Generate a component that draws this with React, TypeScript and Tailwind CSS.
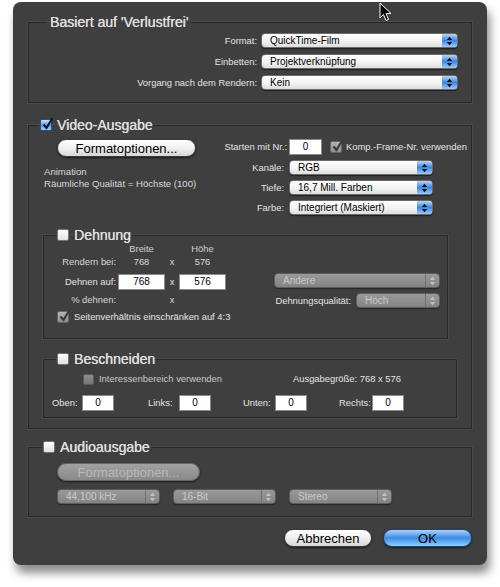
import React from "react"

const font = "font-['Liberation_Sans',Arial,sans-serif]"

function Arrows({ color = "#111" }: { color?: string }) {
  return (
    <svg width="7" height="10" viewBox="0 0 7 10">
      <path d="M3.5 0.8 L6.2 4 H0.8Z M3.5 9.2 L6.2 6 H0.8Z" fill={color} />
    </svg>
  )
}

function Select({ value, w, disabled }: { value: string; w: string; disabled?: boolean }) {
  if (disabled) {
    return (
      <div className={`${w} h-[15px] flex items-stretch rounded-[4px] border border-[#5e5d5e] bg-gradient-to-b from-[#9a999a] to-[#858485] shadow-[0_1px_1px_rgba(0,0,0,0.4)]`}>
        <div className="flex-1 pl-[8px] text-[10px] leading-[13px] text-[#c9c9c9] truncate">{value}</div>
        <div className="w-[14px] border-l border-[#6f6e6f] flex items-center justify-center">
          <Arrows color="#c0c0c0" />
        </div>
      </div>
    )
  }
  return (
    <div className={`${w} h-[15px] flex items-stretch rounded-[4px] border border-[#6b6b6b] bg-gradient-to-b from-white via-[#f4f4f4] to-[#dedede] shadow-[0_1px_1px_rgba(0,0,0,0.5)] overflow-hidden`}>
      <div className="flex-1 pl-[8px] text-[10px] leading-[13px] text-black truncate">{value}</div>
      <div className="w-[15px] bg-gradient-to-b from-[#b8d6f6] via-[#3a86e0] to-[#9ccaf5] flex items-center justify-center">
        <Arrows />
      </div>
    </div>
  )
}

function Check({ kind, size = "w-[12px] h-[12px]" }: { kind: "blue" | "white" | "gray" | "grayoff"; size?: string }) {
  const box =
    kind === "blue"
      ? "bg-gradient-to-b from-[#cfe3fb] via-[#5c9ae8] to-[#a6cdf6] border-[#2c4f86]"
      : kind === "white"
      ? "bg-gradient-to-b from-white to-[#e2e2e2] border-[#777]"
      : kind === "gray"
      ? "bg-gradient-to-b from-[#b3b3b3] to-[#8f8f8f] border-[#666]"
      : "bg-gradient-to-b from-[#8e8e8e] to-[#767676] border-[#5c5c5c]"
  return (
    <div className={`${size} relative shrink-0 rounded-[2px] border ${box}`}>
      {(kind === "blue" || kind === "gray") && (
        <svg className="absolute left-[1px] top-[-3px]" width="12" height="13" viewBox="0 0 12 13">
          <path d="M1.5 7.5 L4.5 11 L10.5 1" fill="none" stroke={kind === "blue" ? "#0d1a33" : "#3a3a3a"} strokeWidth="2.2" />
        </svg>
      )}
    </div>
  )
}

function Input({ value, w }: { value: string; w: string }) {
  return (
    <div className={`${w} h-[16px] bg-white border border-[#8a8a8a] text-[10px] leading-[14px] text-black text-center`}>
      {value}
    </div>
  )
}

function AquaButton({ label, w, blue, disabled }: { label: string; w: string; blue?: boolean; disabled?: boolean }) {
  const skin = disabled
    ? "bg-gradient-to-b from-[#a3a2a3] to-[#8a898a] border-[#666] text-[#b9b9b9]"
    : blue
    ? "bg-gradient-to-b from-[#a9d3fb] via-[#3b8be6] to-[#8fd0fb] border-[#233f6d] text-black"
    : "bg-gradient-to-b from-white via-[#f0f0f0] to-[#d6d6d6] border-[#3a3a3a] text-black"
  return (
    <div className={`${w} h-[18px] rounded-full border ${skin} flex items-center justify-center text-[13px] leading-none shadow-[0_1px_2px_rgba(0,0,0,0.6)]`}>
      {label}
    </div>
  )
}

const groove = "min-w-0 border border-[#2a292a] shadow-[0_0_0_1px_#4b4a4b]"
const title = "text-[14px] leading-[14px] text-[#dedede] [text-shadow:0.3px_0_0_#dedede] whitespace-nowrap"
const label = "text-[9.4px] leading-[12px] text-[#e4e4e4] whitespace-nowrap"
const small = "text-[9.4px] whitespace-nowrap"

export default function App() {
  return (
    <div className={`w-[500px] h-[587px] bg-white relative ${font}`}>
      <div className="ml-[13px] pt-[2px]">
        <div className="w-[474px] h-[563px] rounded-[8px] bg-[#403f40] shadow-[3px_8px_10px_rgba(0,0,0,0.45)] px-[15px] pt-[13px] flex flex-col">
          {/* Basiert auf */}
          <fieldset className={groove}>
            <legend className={`ml-[18px] px-[3px] ${title}`}>Basiert auf 'Verlustfrei'</legend>
            <div className="flex flex-col items-end gap-[6px] pr-[13px] pt-[4px] pb-[12px]">
              {[
                ["Format:", "QuickTime-Film"],
                ["Einbetten:", "Projektverknüpfung"],
                ["Vorgang nach dem Rendern:", "Kein"],
              ].map(([l, v]) => (
                <div key={l} className="flex items-center gap-[4px]">
                  <span className={label}>{l}</span>
                  <Select value={v} w="w-[197px]" />
                </div>
              ))}
            </div>
          </fieldset>

          {/* Video-Ausgabe */}
          <fieldset className={`${groove} mt-[15px]`}>
            <legend className="ml-[10px] px-[1px] flex items-center gap-[5px]">
              <Check kind="blue" />
              <span className={title}>Video-Ausgabe</span>
            </legend>
            <div className="flex pl-[15px] pt-[7px]">
              <div className="w-[171px] flex flex-col shrink-0">
                <div className="ml-[13px]">
                  <AquaButton label="Formatoptionen..." w="w-[139px]" />
                </div>
                <div className="mt-[9px] text-[9.6px] leading-[12px] text-[#d8d8d8] whitespace-nowrap">
                  <div>Animation</div>
                  <div>Räumliche Qualität = Höchste (100)</div>
                </div>
              </div>
              <div className="grid grid-cols-[72px_auto] gap-x-[2px] gap-y-[5px] items-center">
                <span className={`${label} text-right`}>Starten mit Nr.:</span>
                <div className="flex items-center">
                  <Input value="0" w="w-[33px]" />
                  <div className="ml-[8px]">
                    <Check kind="gray" />
                  </div>
                  <span className={`${label} ml-[4px]`}>Komp.-Frame-Nr. verwenden</span>
                </div>
                <span className={`${label} text-right pr-[3px]`}>Kanäle:</span>
                <Select value="RGB" w="w-[144px]" />
                <span className={`${label} text-right pr-[3px]`}>Tiefe:</span>
                <Select value="16,7 Mill. Farben" w="w-[144px]" />
                <span className={`${label} text-right pr-[3px]`}>Farbe:</span>
                <Select value="Integriert (Maskiert)" w="w-[144px]" />
              </div>
            </div>

            {/* Dehnung */}
            <fieldset className={`${groove} mt-[13px] ml-[14px] mr-[23px]`}>
              <legend className="ml-[12px] px-[1px] flex items-center gap-[5px]">
                <Check kind="white" />
                <span className={title}>Dehnung</span>
              </legend>
              <div className="flex">
                <div className="flex flex-col pt-[1px]">
                  <div className={`flex h-[13px] items-center ${small} text-[#d0d0d0]`}>
                    <span className="w-[74px]" />
                    <span className="w-[47px] text-center">Breite</span>
                    <span className="w-[14px]" />
                    <span className="w-[47px] text-center">Höhe</span>
                  </div>
                  <div className={`flex h-[13px] items-center ${small} text-[#d8d8d8]`}>
                    <span className="w-[72px] text-right mr-[2px]">Rendern bei:</span>
                    <span className="w-[47px] text-center">768</span>
                    <span className="w-[14px] text-center">x</span>
                    <span className="w-[47px] text-center">576</span>
                  </div>
                  <div className={`flex h-[16px] items-center ${small} text-[#e4e4e4] mt-[5px]`}>
                    <span className="w-[72px] text-right mr-[2px]">Dehnen auf:</span>
                    <Input value="768" w="w-[47px]" />
                    <span className="w-[14px] text-center">x</span>
                    <Input value="576" w="w-[47px]" />
                  </div>
                  <div className={`flex h-[12px] items-center ${small} text-[#d8d8d8] mt-[4px]`}>
                    <span className="w-[72px] text-right mr-[2px]">% dehnen:</span>
                    <span className="w-[47px]" />
                    <span className="w-[14px] text-center">x</span>
                  </div>
                  <div className="flex items-center gap-[5px] ml-[13px] mt-[5px] pb-[15px]">
                    <Check kind="gray" />
                    <span className={label}>Seitenverhältnis einschränken auf 4:3</span>
                  </div>
                </div>
                <div className="flex-1 flex flex-col items-end pr-[7px] pt-[31px] gap-[5px]">
                  <Select value="Andere" w="w-[166px]" disabled />
                  <div className="flex items-center gap-[5px]">
                    <span className={label}>Dehnungsqualität:</span>
                    <Select value="Hoch" w="w-[84px]" disabled />
                  </div>
                </div>
              </div>
            </fieldset>

            {/* Beschneiden */}
            <fieldset className={`${groove} mt-[13px] ml-[14px] mr-[14px] mb-[10px]`}>
              <legend className="ml-[12px] px-[1px] flex items-center gap-[5px]">
                <Check kind="white" />
                <span className={title}>Beschneiden</span>
              </legend>
              <div className="flex items-center pt-[7px] pl-[39px]">
                <div className="w-[210px] flex items-center gap-[5px]">
                  <Check kind="grayoff" size="w-[11px] h-[11px]" />
                  <span className={`${small} leading-[12px] text-[#c8c8c8]`}>Interessenbereich verwenden</span>
                </div>
                <span className={label}>Ausgabegröße: 768 x 576</span>
              </div>
              <div className="flex items-center pl-[8px] mt-[10px] pb-[6px]">
                {[
                  ["Oben:", "w-[30px]", "w-[96px]"],
                  ["Links:", "w-[31px]", "w-[95px]"],
                  ["Unten:", "w-[32px]", "w-[96px]"],
                  ["Rechts:", "w-[33px]", "w-[96px]"],
                ].map(([l, lw, gw]) => (
                  <div key={l} className={`${gw} flex items-center`}>
                    <span className={`${lw} ${label}`}>{l}</span>
                    <Input value="0" w="w-[32px]" />
                  </div>
                ))}
              </div>
            </fieldset>
          </fieldset>

          {/* Audioausgabe */}
          <fieldset className={`${groove} mt-[11px]`}>
            <legend className="ml-[13px] px-[1px] flex items-center gap-[5px]">
              <Check kind="white" />
              <span className={title}>Audioausgabe</span>
            </legend>
            <div className="pl-[28px] pt-[9px] pb-[12px]">
              <AquaButton label="Formatoptionen..." w="w-[143px]" disabled />
              <div className="flex mt-[8px] gap-[13px]">
                <Select value="44,100 kHz" w="w-[103px]" disabled />
                <Select value="16-Bit" w="w-[103px]" disabled />
                <Select value="Stereo" w="w-[103px]" disabled />
              </div>
            </div>
          </fieldset>

          <div className="flex justify-end gap-[11px] mt-[12px]">
            <AquaButton label="Abbrechen" w="w-[88px]" />
            <AquaButton label="OK" w="w-[89px]" blue />
          </div>
        </div>
      </div>

      {/* mouse pointer */}
      <svg className="absolute left-[379px] top-[2px]" width="13" height="20" viewBox="0 0 13 20">
        <path d="M1 1 L1 16 L4.5 12.5 L7 18.5 L9.5 17.5 L7 11.5 L12 11.5 Z" fill="#000" stroke="#fff" strokeWidth="1" />
      </svg>
    </div>
  )
}
